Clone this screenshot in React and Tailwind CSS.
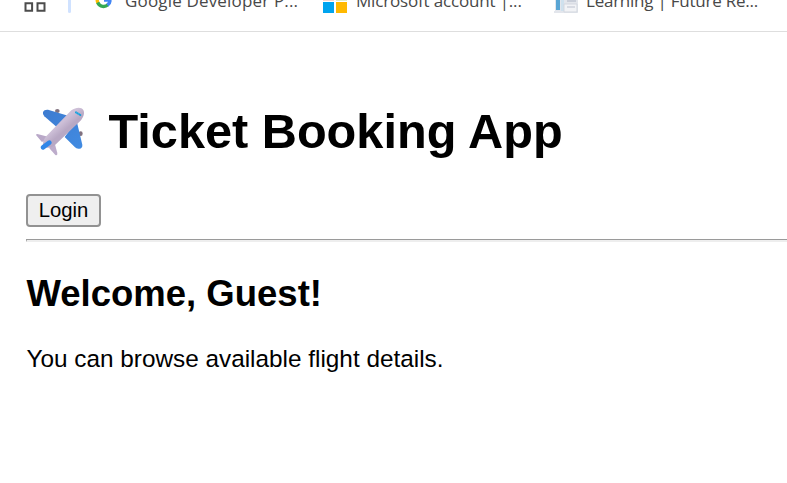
function AppsIcon() {
  return (
    <svg className="h-8 w-6 shrink-0" viewBox="0 0 24 32" fill="none" stroke="#4c4c4c" strokeWidth="2">
      <path d="M2.5 3.2h6.6v7.6H2.5zM14.5 3.2h7v7.6h-7z" />
    </svg>
  );
}

function GoogleIcon() {
  return (
    <svg className="h-8 w-[18px] shrink-0" viewBox="0 0 18 32" fill="none" strokeWidth="3.4">
      <path d="M2.2 0A6.7 6.7 0 0 0 3 3" stroke="#fbbc05" />
      <path d="M2.7 2.4C5 7.2 9.8 7.4 13 4.8" stroke="#34a853" />
      <path d="M12.5 5.2C14.3 3.8 15 2 15.2 0M9 0h7" stroke="#4285f4" />
    </svg>
  );
}

function MicrosoftIcon() {
  return (
    <svg className="h-8 w-6 shrink-0" viewBox="0 0 24 32" shapeRendering="crispEdges">
      <path d="M0 0h11v1H0z" fill="#f9d6cd" />
      <path d="M13 0h11v1H13z" fill="#dfecc7" />
      <path d="M0 2h11v11H0z" fill="#00a4ef" />
      <path d="M13 2h11v11H13z" fill="#ffb900" />
    </svg>
  );
}

function PageIcon() {
  return (
    <svg className="h-8 w-6 shrink-0" viewBox="0 0 24 32">
      <path d="M1 0h23v13H0v-2h1z" fill="#e3e6ec" />
      <path d="M2 0h4v10H2z" fill="#59a5d4" />
      <path d="M7 0h3v11H7z" fill="#cfe1ee" />
      <path d="M10 4h13v8H10z" fill="#f2f3f6" stroke="#d3d7df" />
      <path d="M13 0h9v2h-9z" fill="#c9ced9" />
      <path d="M13 6h8v2h-8z" fill="#d7dae2" />
    </svg>
  );
}

function Airplane() {
  return (
    <svg className="-ml-[6px] h-[70px] w-20 shrink-0" viewBox="0 0 240 210">
      <defs>
        <linearGradient id="body" x1="100" y1="75" x2="130" y2="110" gradientUnits="userSpaceOnUse">
          <stop offset="0" stopColor="#cfc2d9" />
          <stop offset=".5" stopColor="#cdbfd7" />
          <stop offset="1" stopColor="#b8a8c4" />
        </linearGradient>
        <linearGradient id="wing" x1="70" y1="45" x2="185" y2="160" gradientUnits="userSpaceOnUse">
          <stop offset="0" stopColor="#3d7bd0" />
          <stop offset="1" stopColor="#418be2" />
        </linearGradient>
      </defs>
      <ellipse cx="112" cy="48" rx="7" ry="6" fill="#80717f" />
      <ellipse cx="182" cy="116" rx="6" ry="7" fill="#80717f" />
      <path d="M69 51Q72 43 84 44L144 62 110 96 73 64Q67 58 69 51z" fill="url(#wing)" />
      <path d="M170 78L187 149Q188 160 178 161 169 162 165 157L134 126z" fill="url(#wing)" />
      <path d="M48 120Q49 116 55 118L84 125 80 139 65 140z" fill="#b9a8c8" />
      <path d="M90 148L104 145 112 174Q113 183 106 180L88 160z" fill="#bdaccb" />
      <path d="M154 46C168 36 184 35 190 45 195 55 190 66 183 76L106 149C96 159 78 161 72 154 66 147 70 134 80 122z" fill="url(#body)" />
      <path d="M69 157L88 143" stroke="#3187e8" strokeWidth="14" strokeLinecap="round" />
      <path d="M168 52L181 60" stroke="#159dda" strokeWidth="6" strokeLinecap="round" />
      <path d="M171 51l-1 5M177 54l-2 5" stroke="#75c9ec" strokeWidth="1.5" />
    </svg>
  );
}

export default function App() {
  return (
    <div className="h-[483px] w-full overflow-hidden bg-white font-['Liberation_Sans',Arial,sans-serif] text-black">
      <nav className="flex h-8 items-start overflow-hidden border-b border-[#dedede] font-['Open_Sans','Noto_Sans',sans-serif] text-[17px] leading-6 text-[#484848]">
        <div className="ml-[23px] flex"><AppsIcon /></div>
        <div className="ml-[21px] h-[13px] w-[3px] rounded-b-sm bg-[#d0e2ff]" />
        <div className="ml-[24px] flex w-[228px] gap-[12px]">
          <GoogleIcon />
          <span className="-mt-[11px] whitespace-nowrap tracking-[0.17px]">Google Developer P...</span>
        </div>
        <div className="flex w-[231px] gap-[9px]">
          <MicrosoftIcon />
          <span className="-mt-[11px] whitespace-nowrap tracking-[-0.17px]">Microsoft account |...</span>
        </div>
        <div className="flex gap-[8px]">
          <PageIcon />
          <span className="-mt-[11px] whitespace-nowrap tracking-[-0.24px]">Learning | Future Re...</span>
        </div>
      </nav>
      <main className="pl-[26px] pt-[63px]">
        <h1 className="flex h-[70px] items-center gap-[8.5px] whitespace-nowrap text-[48.66px] leading-[56px] font-bold">
          <Airplane />
          <span className="pt-[2px]">Ticket Booking App</span>
        </h1>
        <button className="mt-[29px] flex h-[33px] w-[75px] items-center justify-center rounded-[4px] border-2 border-[#929292] bg-[#efefef] text-[20.28px]">Login</button>
        <hr className="mt-[12px] h-[3px] border-t border-b-2 border-l border-t-[#9a9a9a] border-b-[#eeeeee] border-l-[#9a9a9a]" />
        <h2 className="mt-[31px] pl-[0.5px] text-[36.5px] leading-[42px] font-bold">Welcome, Guest!</h2>
        <p className="mt-[30px] pl-[0.5px] text-[24.33px] leading-7">You can browse available flight details.</p>
      </main>
    </div>
  );
}
